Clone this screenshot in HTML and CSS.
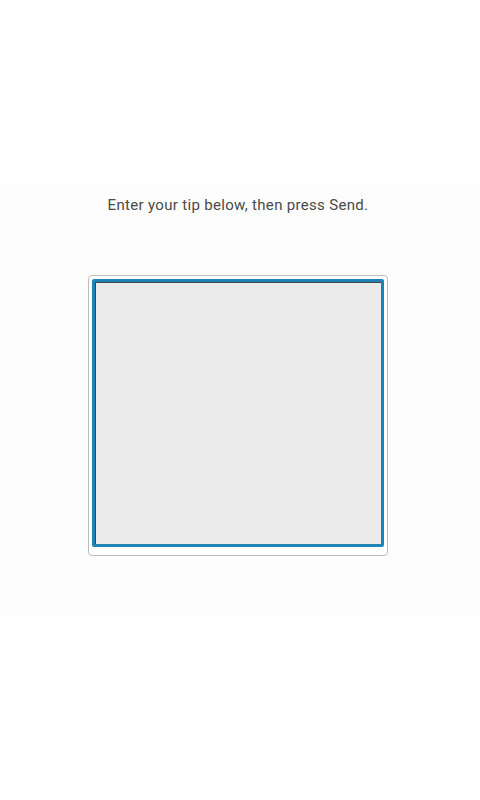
FILE: index.html
```html
<!DOCTYPE html>
<html>
<head>
<meta charset="utf-8">
<link rel="stylesheet" href="styles.css">
</head>
<body>
<div class="top"></div>
<main class="panel">
  <p class="prompt">Enter your tip below, then press Send.</p>
  <div class="frame">
    <textarea class="tip"></textarea>
  </div>
</main>
</body>
</html>
```
FILE: styles.css
```css
html, body {
  margin: 0;
  padding: 0;
  background: #ffffff;
  font-family: Roboto, "Noto Sans", sans-serif;
}
.top {
  height: 183px;
}
.panel {
  background: #fdfdfd;
  height: 433px;
  display: flex;
  flex-direction: column;
  align-items: center;
}
.prompt {
  margin: 12px 0 0 0;
  font-size: 15px;
  line-height: 20px;
  color: #4a4a4a;
  letter-spacing: 0.32px;
  transform: translateX(-2px);
}
.frame {
  margin-top: 60px;
  width: 291px;
  height: 270px;
  padding: 3px 4px 6px 3px;
  border: 1px solid #bdbdbd;
  border-radius: 4px;
  background: #ffffff;
  transform: translateX(-2px);
}
.tip {
  display: block;
  box-sizing: border-box;
  width: 292px;
  height: 268px;
  margin: 0;
  border: 3px solid #1e83b6;
  border-radius: 2px;
  background: #ebebeb;
  box-shadow: inset 1px 1px 0 #444444;
  resize: none;
  outline: none;
  padding: 0;
}
```
